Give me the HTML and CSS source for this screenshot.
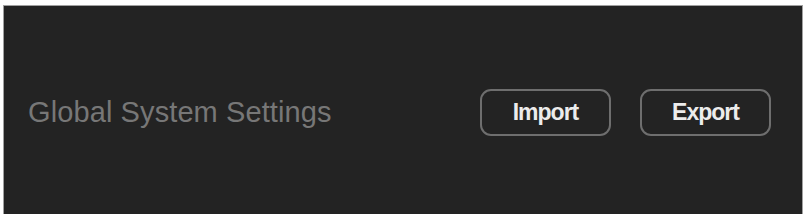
FILE: index.html
```html
<!DOCTYPE html>
<html lang="en">
<head>
    <meta charset="UTF-8">
    <meta name="viewport" content="width=device-width, initial-scale=1.0">
    <title>Global System Settings</title>
    <link rel="stylesheet" href="styles.css">
</head>
<body>
    <div class="settings-panel">
        <h2 class="settings-title">Global System Settings</h2>
        <div class="settings-actions">
            <button class="action-button" id="import-btn">Import</button>
            <button class="action-button" id="export-btn">Export</button>
        </div>
    </div>
</body>
</html>
```

FILE: styles.css
```css
html, body {
    margin: 0;
    height: 100%;
    background-color: #ffffff;
    overflow: hidden;
}

body {
    font-family: "Liberation Sans", Arial, sans-serif;
    padding: 5px 0 0 3px;
    box-sizing: border-box;
}

.settings-panel {
    display: flex;
    align-items: center;
    justify-content: space-between;
    height: 209px;
    padding: 4px 31px 0 24px;
    background-color: #232323;
    border: 1px solid #a0a0a0;
    border-bottom: none;
    box-sizing: border-box;
}

.settings-title {
    margin: 0;
    font-size: 29px;
    font-weight: normal;
    color: #777777;
    letter-spacing: 0.1px;
}

.settings-actions {
    display: flex;
    gap: 29px;
}

.action-button {
    width: 131px;
    height: 47px;
    background-color: #232323;
    color: #ececec;
    border: 2px solid #6e6e6e;
    border-radius: 11px;
    font-family: "Liberation Sans", Arial, sans-serif;
    font-size: 23px;
    font-weight: bold;
    letter-spacing: -1px;
    cursor: pointer;
}
```
